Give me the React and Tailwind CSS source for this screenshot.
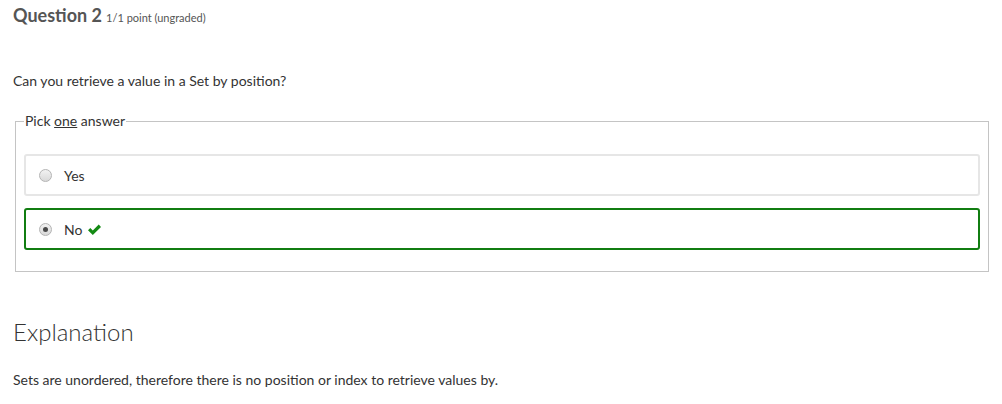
import React from 'react';

const Radio = ({ checked }) => (
  <span className="flex h-[13px] w-[13px] shrink-0 items-center justify-center rounded-full border border-[#b4b4b4] bg-gradient-to-b from-[#f2f2f2] to-[#d9d9d9]">
    {checked && <span className="h-[5px] w-[5px] rounded-full bg-[#4a4a4a]" />}
  </span>
);

const Option = ({ label, checked, correct }) => (
  <div
    className={
      'flex h-[42px] items-center gap-[12px] rounded-[3px] border-2 pl-[13px] ' +
      (correct ? 'border-[#117d11]' : 'border-[#e6e6e6]')
    }
  >
    <Radio checked={checked} />
    <span className="flex items-center gap-[5px] text-[14px] text-[#333]">
      {label}
      {correct && (
        <svg width="15" height="12" viewBox="0 0 15 12" className="mt-[1px]">
          <path d="M1 6.3 L3.3 4 L5.8 6.5 L11.7 0.6 L14 2.9 L5.8 11.1 Z" fill="#138a13" />
        </svg>
      )}
    </span>
  </div>
);

export default function App() {
  return (
    <div className="min-h-[404px] bg-white pl-[13px] pr-[11px] font-['Lato',sans-serif] text-[#333]">
      <h2 className="pt-[3px] leading-[24px] text-[#555]">
        <span className="text-[18px] font-bold">Question 2</span>{' '}
        <span className="text-[11px]">1/1 point (ungraded)</span>
      </h2>

      <p className="mt-[41px] text-[14px] leading-[20px]">Can you retrieve a value in a Set by position?</p>

      <fieldset className="mx-[2px] mt-[20px] border border-[#c4c4c4] px-[8px] pb-[21px]">
        <legend className="px-[1px] text-[14px] leading-[20px]">
          Pick <span className="underline">one</span> answer
        </legend>
        <div className="mt-[23px] flex flex-col gap-[12px]">
          <Option label="Yes" />
          <Option label="No" checked correct />
        </div>
      </fieldset>

      <h3 className="mt-[44px] text-[24px] font-light leading-[32px] text-[#333]">Explanation</h3>

      <p className="mt-[22px] text-[14px] leading-[20px]">
        Sets are unordered, therefore there is no position or index to retrieve values by.
      </p>
    </div>
  );
}
